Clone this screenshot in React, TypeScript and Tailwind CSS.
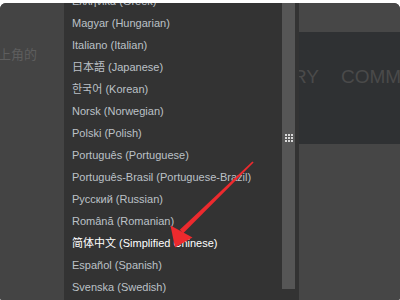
const languages = [
  "Ελληνικά (Greek)",
  "Magyar (Hungarian)",
  "Italiano (Italian)",
  "日本語 (Japanese)",
  "한국어 (Korean)",
  "Norsk (Norwegian)",
  "Polski (Polish)",
  "Português (Portuguese)",
  "Português-Brasil (Portuguese-Brazil)",
  "Русский (Russian)",
  "Română (Romanian)",
  "简体中文 (Simplified Chinese)",
  "Español (Spanish)",
  "Svenska (Swedish)",
];

const selected = "简体中文 (Simplified Chinese)";

function Grip() {
  return (
    <div className="grid grid-cols-3 gap-px">
      {Array.from({ length: 9 }).map((_, i) => (
        <span key={i} className="h-[2px] w-[2px] bg-[#d8d8d8]" />
      ))}
    </div>
  );
}

function Arrow() {
  return (
    <svg
      className="pointer-events-none absolute left-0 top-[-3px]"
      width="400"
      height="300"
      viewBox="0 0 400 300"
    >
      <path
        d="M253.6 162.6 L183.2 233.2 L179.8 229.8 L252.4 161.4 Z"
        fill="#ec2a2e"
      />
      <path d="M170.5 225.5 L175 247.5 L192.5 237.5 Z" fill="#ec2a2e" />
    </svg>
  );
}

export default function App() {
  return (
    <div
      className="h-[300px] w-[400px] overflow-hidden bg-white"
      style={{ fontFamily: '"Liberation Sans", Arial, "Noto Sans CJK SC", sans-serif' }}
    >
      <div className="relative mt-[3px] flex h-[297px] overflow-hidden rounded-t-[6px] rounded-b-[2px] bg-[#444444]">
        {/* page behind, left part */}
        <div className="w-[64px] shrink-0 bg-[#444444] pt-[43px]">
          <p
            className="ml-[-2px] whitespace-nowrap text-[13px] leading-[16px] text-[#5e5e5e]"
            style={{ fontFamily: '"Noto Sans CJK SC", sans-serif' }}
          >
            上角的
          </p>
        </div>

        {/* language dropdown */}
        <div className="flex w-[235px] shrink-0 bg-[#333333]">
          <ul className="mt-[-13px] flex-1 pl-[8px]">
            {languages.map((lang) => (
              <li
                key={lang}
                className={
                  "h-[22px] whitespace-nowrap text-[11px] leading-[22px] " +
                  (lang === selected ? "text-white" : "text-[#bcc1c7]")
                }
              >
                {lang}
              </li>
            ))}
          </ul>
          <div className="w-[17px] shrink-0">
            <div className="mt-[-16px] flex h-[302px] w-[13px] items-center justify-center bg-[#565656]">
              <Grip />
            </div>
          </div>
        </div>

        {/* page behind, right part */}
        <div className="flex flex-1 flex-col overflow-hidden">
          <div className="h-[29px] bg-[#474747]" />
          <div className="flex h-[112px] gap-[22px] bg-[#2f3133] pt-[35px] text-[19px] leading-[20px] text-[#4a4a4a]">
            <span className="ml-[-61px] shrink-0">LIBRARY</span>
            <span className="shrink-0">COMMUNITY</span>
          </div>
          <div className="flex-1 bg-[#464646]" />
        </div>

        <Arrow />
      </div>
    </div>
  );
}
